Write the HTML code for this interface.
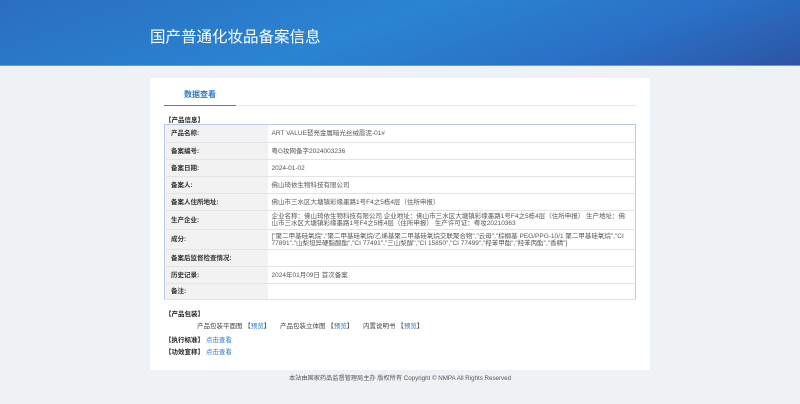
<!DOCTYPE html>
<html><head><meta charset="utf-8"><style>
*{margin:0;padding:0;box-sizing:border-box}
body{width:800px;height:404px;background:#eff2f5;font-family:"Liberation Sans","Noto Sans CJK SC",sans-serif;color:#333;position:relative;overflow:hidden;font-size:6.5px}
.hd{position:absolute;left:0;top:0;width:800px;height:66px;background:linear-gradient(160deg,#2b6ec0 0%,#2a84d2 45%,#2a70c6 75%,#2c55a4 100%);border-bottom:1px solid #5aa0e0}
.hd h1{position:absolute;left:150px;top:25px;color:#fff;font-size:15.5px;font-weight:normal;font-family:"Noto Sans CJK SC",sans-serif}
.card{position:absolute;left:150px;top:78px;width:500px;height:292px;background:#fff}
.tab{position:absolute;left:14px;top:11px;width:72px;text-align:center;color:#2a7ac8;font-size:8px;font-weight:bold;height:17px;border-bottom:1.5px solid #2a8ad6}
.line{position:absolute;left:86px;top:27px;width:400px;border-top:1px solid #e5e8ec}
.sec{position:absolute;left:15px;font-weight:bold;color:#222}
table{position:absolute;left:14px;top:46px;width:472px;border-collapse:collapse;border:1px solid #b8cbe6}
td{border-bottom:1px solid #e4e4e4;padding:0 4px;vertical-align:middle;line-height:7px;color:#555}
td.l{width:103px;background:#f2f2f2;font-weight:bold;color:#333;padding-left:6px}
a{color:#2a7ac8;text-decoration:none}
.ft{position:absolute;top:373px;left:0;width:800px;text-align:center;color:#555;font-size:6.2px}
</style></head><body>
<div class="hd"><h1>国产普通化妆品备案信息</h1></div>
<div class="card">
<div class="tab">数据查看</div><div class="line"></div>
<div class="sec" style="top:36px">【产品信息】</div>
<table>
<tr style="height:18px"><td class="l">产品名称:</td><td>ART VALUE琶亮金属暗光丝绒唇泥-01#</td></tr>
<tr style="height:17px"><td class="l">备案编号:</td><td>粤G妆网备字2024003236</td></tr>
<tr style="height:17px"><td class="l">备案日期:</td><td>2024-01-02</td></tr>
<tr style="height:17px"><td class="l">备案人:</td><td>佛山琦依生物科技有限公司</td></tr>
<tr style="height:17px"><td class="l">备案人住所地址:</td><td>佛山市三水区大塘镇彩缘墨路1号F4之5栋4层（住所申报）</td></tr>
<tr style="height:19px"><td class="l">生产企业:</td><td>企业名称：佛山琦依生物科技有限公司 企业地址：佛山市三水区大塘镇彩缘墨路1号F4之5栋4层（住所申报） 生产地址：佛山市三水区大塘镇彩缘墨路1号F4之5栋4层（住所申报） 生产许可证：粤妆20210363</td></tr>
<tr style="height:20px"><td class="l">成分:</td><td>["聚二甲基硅氧烷","聚二甲基硅氧烷/乙烯基聚二甲基硅氧烷交联聚合物","云母","棕榈基 PEG/PPG-10/1 聚二甲基硅氧烷","CI 77891","山梨坦异硬脂酸酯","CI 77491","三山梨醇","CI 15850","CI 77499","羟苯甲酯","羟苯丙酯","香精"]</td></tr>
<tr style="height:17px"><td class="l">备案后监督检查情况:</td><td></td></tr>
<tr style="height:17px"><td class="l">历史记录:</td><td>2024年01月09日 首次备案</td></tr>
<tr style="height:16px"><td class="l">备注:</td><td></td></tr>
</table>
<div class="sec" style="top:230px">【产品包装】</div>
<div style="position:absolute;top:242px;left:47px;color:#444">产品包装平面图 【<a>预览</a>】</div>
<div style="position:absolute;top:242px;left:130px;color:#444">产品包装立体图 【<a>预览</a>】</div>
<div style="position:absolute;top:242px;left:213px;color:#444">内置说明书 【<a>预览</a>】</div>
<div class="sec" style="top:256px">【执行标准】 <a style="font-weight:normal">点击查看</a></div>
<div class="sec" style="top:268px">【功效宣称】 <a style="font-weight:normal">点击查看</a></div>
</div>
<div class="ft">本站由国家药品监督管理局主办 版权所有 Copyright © NMPA All Rights Reserved</div>
</body></html>
